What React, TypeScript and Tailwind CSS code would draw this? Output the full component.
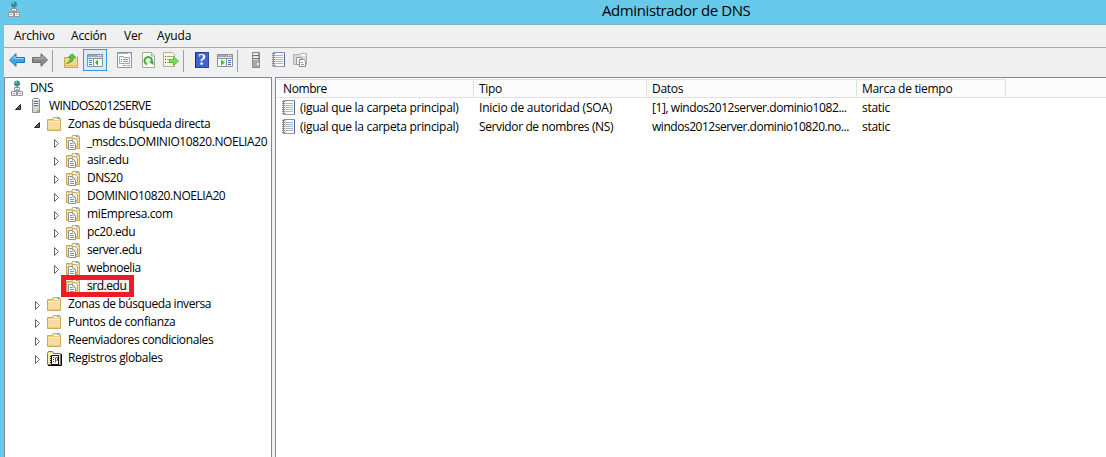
import type { ReactNode } from "react";

function Icon({ children, className = "" }: { children: ReactNode; className?: string }) {
  return (
    <svg width="16" height="16" viewBox="0 0 16 16" className={`block shrink-0 ${className}`}>
      {children}
    </svg>
  );
}

function DnsIcon() {
  return (
    <Icon>
      <circle cx="8" cy="3.5" r="2.9" fill="#2b86c4" />
      <path d="M6 2h2l1 1-1 2-1-1zM9 4h2l-2 2z" fill="#2fae46" />
      <path d="M6.5 1.5h1.5v1H6.5z" fill="#d9f4ff" />
      <path d="M8 6v1" stroke="#777" />
      <path d="M5.5 7.5h5v3h-5zM2.5 11.5h5v4h-5zM8.5 11.5h5v4h-5z" fill="#efeff1" stroke="#92929b" />
      <path d="M7 9.5h2M4 13.5h2M10 13.5h2" stroke="#a8a8b0" />
    </Icon>
  );
}

function ServerIcon() {
  return (
    <Icon>
      <path d="M5.5 1.5l1-1h5l1 1v13h-7z" fill="#d2d4d7" stroke="#8f9295" />
      <path d="M6 1.5h6" stroke="#f2f2f2" />
      <path d="M7 3.5h4M7 5.5h4M7 7.5h4" stroke="#6a6d70" />
      <path d="M7 4.5h4M7 6.5h4" stroke="#f3f3f3" />
      <path d="M10 12h2v2h-2z" fill="#5ee22d" />
    </Icon>
  );
}

function FolderShape() {
  return (
    <>
      <path d="M1.5 3.5h5l1-2h6l1 1v12h-13z" fill="#ebcb7c" stroke="#cda957" />
      <path d="M8 2h5v2H8z" fill="#fff7dc" />
      <path d="M11 2h2v1h-2z" fill="#5aa5dc" />
      <path d="M2 5h12v9H2z" fill="#f4dd9d" />
      <path d="M2 5.5h12" stroke="#fff0c4" />
      <path d="M2 13.5h12" stroke="#ebcd80" />
    </>
  );
}

function FolderIcon() {
  return <Icon><FolderShape /></Icon>;
}

function ZoneIcon() {
  return (
    <Icon>
      <FolderShape />
      <path d="M7.5 4.5h3l2 2v6h-5z" fill="#fbf3d6" stroke="#b7a878" />
      <path d="M3.5 6.5h4l3 3v6h-7z" fill="#fff" stroke="#8b929c" />
      <path d="M7.5 7v2.5h3" fill="none" stroke="#b3bac2" />
      <path d="M5 9.5h2M5 11.5h4M5 13.5h4" stroke="#5a9dd2" />
    </Icon>
  );
}

function LogIcon() {
  return (
    <Icon>
      <path d="M1.5 3.5l1-2h4l1 2h7v11h-13z" fill="#f7f08a" stroke="#777" />
      <path d="M15.5 4v11.5H2" fill="none" stroke="#000" />
      <path d="M2.5 5v8M4 4.5h9" stroke="#fff" strokeDasharray="1 1" />
      <path d="M5.5 5.5h7v9h-7z" fill="#fff" stroke="#111" />
      <path d="M4.5 6v8" stroke="#111" strokeDasharray="1 1" />
      <path d="M7 7.5h1M7 9.5h1M7 11.5h1" stroke="#2440bb" />
      <path d="M9.5 12.5v-5h2v3h-1" fill="none" stroke="#e22936" />
    </Icon>
  );
}

function Notebook({ stripes }: { stripes: string }) {
  return (
    <Icon>
      <path d="M2.5.5h11v14h-11z" fill="#fff" stroke="#8390b2" />
      <path d="M5 3.5h7M5 5.5h7M5 7.5h7M5 9.5h7M5 11.5h7" className={stripes} />
      <path d="M1 1.5h3M1 3.5h3M1 5.5h3M1 7.5h3M1 9.5h3M1 11.5h3M1 13.5h3" stroke="#8a8a8a" />
      <path d="M4.5 1v13" stroke="#dcdcdc" />
      <path d="M13.5 1v13.5" stroke="#5468a4" />
      <path d="M4 14.5h9" stroke="#9a9aa2" />
    </Icon>
  );
}

function ArrowIcon({ back = false }: { back?: boolean }) {
  return (
    <svg width="18" height="16" viewBox="0 0 18 16" className={back ? "block" : "block -scale-x-100"}>
      <path
        d="M1.5 8L8 1.7v3.8h8.5v5H8v3.8z"
        fill={back ? "#36a7ee" : "#8b8b8b"}
        stroke={back ? "#1f74b8" : "#6c6c6c"}
      />
      <path d="M3.5 7.5l3.5-3.3v2.3h8.5" fill="none" stroke={back ? "#8cdbff" : "#b4b4b4"} />
    </svg>
  );
}

function WindowIcon({ side }: { side: "left" | "right" }) {
  return (
    <Icon>
      <path d="M.5 2.5h15v12H.5z" fill="#f8f8f8" stroke="#8a929a" />
      <path d="M1 3h14v2H1z" fill="#9ea8b1" />
      <path d="M11 3.5h1M13 3.5h1" stroke="#fff" />
      <path d="M1 5.5h14" stroke="#dfe5ea" />
      <path d="M1 6.5h14" stroke="#8a929a" />
      {side === "left" ? (
        <>
          <path d="M6.5 7v7" stroke="#8a929a" />
          <path d="M2 8.5h3M2 10.5h3M2 12.5h3" stroke="#3687c5" />
          <path d="M11 7.5v6L8 10.5z" fill="#35ad29" />
        </>
      ) : (
        <>
          <path d="M9.5 7v7" stroke="#8a929a" />
          <path d="M11 8.5h3M11 10.5h3M11 12.5h3" stroke="#3170c0" />
          <path d="M4 7.5v6l4-3z" fill="#35c629" />
        </>
      )}
    </Icon>
  );
}

function Sep() {
  return <span className="mt-[1px] block h-[22px] w-px shrink-0 bg-[#a0a0a0]" />;
}

function Toolbar() {
  return (
    <div className="flex h-[29px] shrink-0 items-start bg-[#f0f0f0] pt-[1px] pl-[4px]">
      <div className="mt-[3px] flex gap-[5px]"><ArrowIcon back /><ArrowIcon /></div>
      <div className="ml-[3px]"><Sep /></div>
      <div className="mt-[4px] ml-[11px]">
        <Icon>
          <path d="M.5 4.5h6l1-1h6v11H.5z" fill="#f5d889" stroke="#c3a562" />
          <path d="M1 12.5h12" stroke="#e2bb65" />
          <path d="M9 3h4v2H9z" fill="#e9edf0" />
          <path d="M2.5 10.5Q6.5 9 6.5 4.5H4.2L8 .7l4 3.8H9.6Q9.5 9.5 2.5 10.5z" fill="#58c83a" stroke="#34942b" strokeWidth=".7" />
        </Icon>
      </div>
      <div className="ml-[3px] flex h-[22px] w-[24px] items-center justify-center border border-[#3399e5] bg-[#dcebfc]">
        <WindowIcon side="left" />
      </div>
      <div className="mt-[3px] ml-[10px]">
        <Icon>
          <path d="M.5.5h14v15H.5z" fill="#fff" stroke="#8a949c" />
          <path d="M1 1.5h13" stroke="#a4adb5" />
          <path d="M11 1.5h2" stroke="#fff" />
          <path d="M2.5 4.5h4v1h6v6h-10z" fill="#f8f8f8" stroke="#a0a8b0" />
          <path d="M4 7.5h1M4 9.5h1" stroke="#4da1d8" />
          <path d="M6 7.5h5M6 9.5h5M10 13.5h3" stroke="#979fa6" />
          <path d="M6 13.5h3" stroke="#38c0f0" />
        </Icon>
      </div>
      <div className="mt-[3px] ml-[8px]">
        <Icon>
          <path d="M1.5.5h9l3 3v12h-12z" fill="#fffdf0" stroke="#a8a8a4" />
          <path d="M10.5 1v3h3" fill="#eee" stroke="#aaa" />
          <path d="M6 12.3A3.7 3.7 0 1 1 10.5 10.5" fill="none" stroke="#34ac3d" strokeWidth="2" />
          <path d="M7.5 9.5h5V13z" fill="#34ac3d" />
        </Icon>
      </div>
      <div className="mt-[3px] ml-[6px]">
        <Icon>
          <path d="M.5.5h9l2 2v12H.5z" fill="#fff8dd" stroke="#b4ad9c" />
          <path d="M2 4.5h1M2 7.5h1M2 10.5h1" stroke="#444" />
          <path d="M4 4.5h6M4 7.5h4M4 10.5h4" stroke="#a5a196" />
          <path d="M6.5 7.5h4v-3l5 4.5-5 4.5v-3h-4z" fill="#80dd4c" stroke="#4bad31" strokeWidth=".8" />
        </Icon>
      </div>
      <div className="ml-[4px]"><Sep /></div>
      <div className="mt-[3px] ml-[11px] flex h-[16px] w-[14px] items-center justify-center border border-[#2c4497] border-l-[#162a70] bg-[#3f65cd] font-['Liberation_Serif',serif] text-[16px] leading-[16px] font-bold text-white">
        ?
      </div>
      <div className="mt-[3px] ml-[8px]"><WindowIcon side="right" /></div>
      <div className="ml-[4px]"><Sep /></div>
      <div className="mt-[3px] ml-[10px]">
        <Icon>
          <path d="M4.5.5h7v15h-7z" fill="#a9a9a9" stroke="#8a8a8a" />
          <path d="M5 1h5v7H5z" fill="#dedede" />
          <path d="M5 3.5h6M5 6.5h6" stroke="#6c6c6c" />
          <path d="M5 2.5h5M5 5.5h5" stroke="#fff" />
          <path d="M9 11h2v2H9z" fill="#eee" />
        </Icon>
      </div>
      <div className="mt-[3px] ml-[7px]"><Notebook stripes="stroke-[#8fbcd8]" /></div>
      <div className="mt-[3px] ml-[6px]">
        <Icon>
          <path d="M.5 2.5h6l1-1h6v11H.5z" fill="#d8d8d8" stroke="#b0b0b0" />
          <path d="M8 2h5v2H8z" fill="#f6f6f6" />
          <path d="M3.5 5.5h5v7h-5z" fill="#f5f5f5" stroke="#999" />
          <path d="M6.5 7.5h4l2 2v5h-6z" fill="#fff" stroke="#8c8c8c" />
          <path d="M8 10.5h2M8 12.5h3" stroke="#999" />
        </Icon>
      </div>
    </div>
  );
}

type Node = { label: string; level: 0 | 1 | 2 | 3; icon: ReactNode; open?: boolean; leaf?: boolean; track: string };

const nodes: Node[] = [
  { label: "DNS", level: 0, icon: <DnsIcon />, leaf: true, track: "tracking-[-0.4px]" },
  { label: "WINDOS2012SERVE", level: 1, icon: <ServerIcon />, open: true, track: "tracking-[-0.55px]" },
  { label: "Zonas de búsqueda directa", level: 2, icon: <FolderIcon />, open: true, track: "tracking-[-0.38px]" },
  { label: "_msdcs.DOMINIO10820.NOELIA20", level: 3, icon: <ZoneIcon />, track: "tracking-[-0.4px]" },
  { label: "asir.edu", level: 3, icon: <ZoneIcon />, track: "tracking-[-0.4px]" },
  { label: "DNS20", level: 3, icon: <ZoneIcon />, track: "tracking-[-0.5px]" },
  { label: "DOMINIO10820.NOELIA20", level: 3, icon: <ZoneIcon />, track: "tracking-[-0.43px]" },
  { label: "miEmpresa.com", level: 3, icon: <ZoneIcon />, track: "tracking-[-0.37px]" },
  { label: "pc20.edu", level: 3, icon: <ZoneIcon />, track: "tracking-[-0.4px]" },
  { label: "server.edu", level: 3, icon: <ZoneIcon />, track: "tracking-[-0.5px]" },
  { label: "webnoelia", level: 3, icon: <ZoneIcon />, track: "tracking-[-0.4px]" },
  { label: "srd.edu", level: 3, icon: <ZoneIcon />, leaf: true, track: "tracking-[-0.45px]" },
  { label: "Zonas de búsqueda inversa", level: 2, icon: <FolderIcon />, track: "tracking-[-0.42px]" },
  { label: "Puntos de confianza", level: 2, icon: <FolderIcon />, track: "tracking-[-0.3px]" },
  { label: "Reenviadores condicionales", level: 2, icon: <FolderIcon />, track: "tracking-[-0.38px]" },
  { label: "Registros globales", level: 2, icon: <LogIcon />, track: "tracking-[-0.35px]" },
];

const indents = ["pl-[4px]", "pl-[9px]", "pl-[28px]", "pl-[47px]"];

function TreeRow({ node }: { node: Node }) {
  const selected = node.label === "srd.edu";
  return (
    <li className={`relative flex h-[18px] items-center ${indents[node.level]}`}>
      {node.level > 0 && (
        <svg width="9" height="9" viewBox="0 0 9 9" className="mt-[2px] mr-[4px] block shrink-0">
          {!node.leaf &&
            (node.open ? (
              <path d="M6.5 1.5v5h-5z" fill="#595959" stroke="#262626" />
            ) : (
              <path d="M2.5.5v8l4-4z" fill="#fff" stroke="#666" />
            ))}
        </svg>
      )}
      <span className="w-[16px] shrink-0">{node.icon}</span>
      <span className={`whitespace-pre ${node.level === 0 ? "ml-[5px]" : "ml-[6px]"} ${node.track} ${selected ? "bg-[#f0f0f0] pr-[3px]" : ""}`}>{node.label}</span>
      {selected && <span className="absolute top-[-2px] left-[56px] h-[22px] w-[73px] border-[5px] border-[#ed1c24]" />}
    </li>
  );
}

const columns = [
  { title: "Nombre", width: "w-[197px] pl-[6px] tracking-[-0.4px]" },
  { title: "Tipo", width: "w-[173px] pl-[5px]" },
  { title: "Datos", width: "w-[210px] pl-[5px]" },
  { title: "Marca de tiempo", width: "w-[149px] pl-[5px]" },
];

const records = [
  {
    type: "Inicio de autoridad (SOA)",
    typeTrack: "tracking-[-0.22px]",
    data: "[1], windos2012server.dominio1082...",
    dataTrack: "tracking-[-0.42px]",
    stripes: "stroke-[#8cc4e8]",
  },
  {
    type: "Servidor de nombres (NS)",
    typeTrack: "tracking-[-0.38px]",
    data: "windos2012server.dominio10820.no...",
    dataTrack: "tracking-[-0.47px]",
    stripes: "stroke-[#a3b6c6]",
  },
];

export default function App() {
  return (
    <div className="flex h-[457px] w-[1106px] flex-col overflow-hidden bg-[#67caeb] font-['Open_Sans','Noto_Sans',sans-serif] text-[12px] leading-[18px] text-black">
      <header className="flex h-[24px] shrink-0 items-start pl-[6px]">
        <div className="mt-[1px]"><DnsIcon /></div>
        <h1 className="ml-[580px] text-[15px] leading-[20px] font-normal tracking-[-0.4px] whitespace-nowrap">Administrador de DNS</h1>
      </header>
      <div className="ml-[4px] flex min-h-0 flex-1 flex-col border-t border-[#7eaec8] bg-[#f0f0f0]">
        <nav className="flex h-[23px] shrink-0 items-start border-b border-[#a7a9b3] pt-[2px] pl-[10px] tracking-[-0.15px]">
          <span className="w-[57px]">Archivo</span>
          <span className="w-[53px]">Acción</span>
          <span className="w-[33px]">Ver</span>
          <span>Ayuda</span>
        </nav>
        <Toolbar />
        <main className="flex min-h-0 flex-1">
          <ul className="w-[268px] shrink-0 overflow-hidden border-x border-t border-[#828790] bg-white pt-[1px]">
            {nodes.map((node) => <TreeRow key={node.label} node={node} />)}
          </ul>
          <section className="ml-[3px] min-w-0 flex-1 border-t border-l border-[#828790] bg-white pt-[1px] pl-[1px] tracking-[-0.3px]">
            <div className="flex h-[19px] border-b border-[#e0e0e0] bg-[#fcfcfc] leading-[17px]">
              {columns.map((column) => (
                <div key={column.title} className={`shrink-0 border-t border-r border-[#e0e0e0] ${column.width}`}>{column.title}</div>
              ))}
            </div>
            {records.map((record) => (
              <div key={record.type} className="flex h-[19px] items-center">
                <div className="flex w-[197px] items-center pl-[4px]">
                  <Notebook stripes={record.stripes} />
                  <span className="ml-[3px] whitespace-nowrap">(igual que la carpeta principal)</span>
                </div>
                <div className={`w-[173px] pl-[5px] whitespace-nowrap ${record.typeTrack}`}>{record.type}</div>
                <div className={`w-[210px] pl-[5px] whitespace-nowrap ${record.dataTrack}`}>{record.data}</div>
                <div className="pl-[5px]">static</div>
              </div>
            ))}
          </section>
        </main>
      </div>
    </div>
  );
}
